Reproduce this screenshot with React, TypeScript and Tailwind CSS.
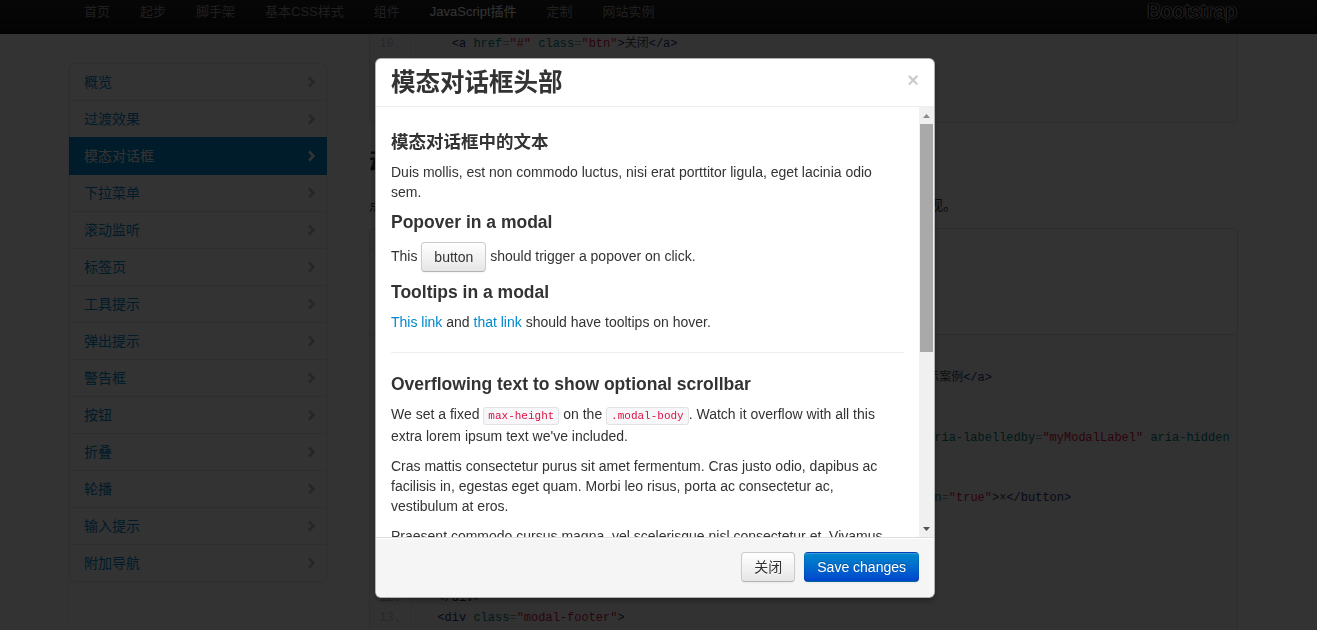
import React from 'react'

const navItems = ['首页', '起步', '脚手架', '基本CSS样式', '组件', 'JavaScript插件', '定制', '网站实例']

const sideItems = [
  '概览', '过渡效果', '模态对话框', '下拉菜单', '滚动监听', '标签页', '工具提示',
  '弹出提示', '警告框', '按钮', '折叠', '轮播', '输入提示', '附加导航',
]

const staticCode = [
  '    <a href="#" class="btn">关闭</a>',
  '    <a href="#" class="btn btn-primary">Save changes</a>',
  '  </div>',
  '</div>',
]

const liveCode = [
  '<!-- Button to trigger modal -->',
  '<a href="#myModal" role="button" class="btn" data-toggle="modal">查看演示案例</a>',
  '',
  '<!-- Modal -->',
  '<div id="myModal" class="modal hide fade" tabindex="-1" role="dialog" aria-labelledby="myModalLabel" aria-hidden\n="true">',
  '  <div class="modal-header">',
  '    <button type="button" class="close" data-dismiss="modal" aria-hidden="true">×</button>',
  '    <h3 id="myModalLabel">Modal header</h3>',
  '  </div>',
  '  <div class="modal-body">',
  '    <p>One fine body…</p>',
  '  </div>',
  '  <div class="modal-footer">',
  '    <button class="btn" data-dismiss="modal" aria-hidden="true">关闭</button>',
  '    <button class="btn btn-primary">Save changes</button>',
  '  </div>',
  '</div>',
]

// prettify-ish colours
const tokenColor: Record<string, string> = {
  com: 'text-[#93a1a1]',
  tag: 'text-[#1e347b]',
  atv: 'text-[#dd1144]',
  pun: 'text-[#93a1a1]',
  atn: 'text-[#008080]',
  pln: 'text-[#48484c]',
}

const tokenRe = /(<!--.*?-->)|(<\/?[a-zA-Z0-9]+)|("[^"]*")|(=)|(>)|([a-zA-Z-]+(?=\n?=))|(\s+)|([^<>="\s]+)/g
const kinds = ['com', 'tag', 'atv', 'pun', 'tag', 'atn', 'pln', 'pln']

function highlight(src: string) {
  return Array.from(src.matchAll(tokenRe)).map((m, i) => {
    const k = kinds[m.slice(1).findIndex((g) => g !== undefined)]
    return (
      <span key={i} className={tokenColor[k]}>
        {m[0]}
      </span>
    )
  })
}

function CodeLines({ start, lines }: { start: number; lines: string[] }) {
  return (
    <>
      {lines.map((src, i) => (
        <div key={i} className="flex">
          <span className="w-[33px] shrink-0 pr-[10px] text-right text-[#bebec5]">{start + i}.</span>
          <span className="pl-[12px] whitespace-pre">{highlight(src)}</span>
        </div>
      ))}
    </>
  )
}

function Chevron({ active }: { active: boolean }) {
  return (
    <svg
      width="14"
      height="14"
      viewBox="0 0 14 14"
      className={active ? '-mr-[6px] text-white' : '-mr-[6px] text-black opacity-25'}
    >
      <path d="M5 2.5 L9.5 7 L5 11.5" fill="none" stroke="currentColor" strokeWidth="2.6" strokeLinejoin="miter" />
    </svg>
  )
}

function Scrollbar() {
  return (
    <div className="flex w-[15px] shrink-0 flex-col bg-[#f0f0f0]">
      <div className="flex h-[17px] items-center justify-center">
        <svg width="7" height="4" viewBox="0 0 7 4">
          <polygon points="0,4 3.5,0 7,4" fill="#8a8a8a" />
        </svg>
      </div>
      <div className="mx-[1px] h-[228px] bg-[#a9a9a9]" />
      <div className="flex-1" />
      <div className="flex h-[17px] items-center justify-center">
        <svg width="7" height="4" viewBox="0 0 7 4">
          <polygon points="0,0 7,0 3.5,4" fill="#505050" />
        </svg>
      </div>
    </div>
  )
}

export default function App() {
  return (
    <div className="relative h-screen overflow-hidden bg-white font-['Liberation_Sans','Noto_Sans_CJK_SC',sans-serif] text-[14px] leading-[20px] text-[#333]">
      {/* Navbar */}
      <div className="h-[34px] bg-linear-to-b from-[#222] to-[#111]">
        <div className="ml-[69px] flex w-[1168px] justify-between">
          <ul className="flex pt-[3px] text-[13px] leading-[18px]">
            {navItems.map((n) => (
              <li key={n}>
                <a className={n === 'JavaScript插件' ? 'block px-[15px] text-white' : 'block px-[15px] text-[#999]'}>{n}</a>
              </li>
            ))}
          </ul>
          <span className="text-[21px] leading-[22px] text-black [text-shadow:0_0_1px_#fff,0_0_1px_#fff,0_0_2px_#ddd]">Bootstrap</span>
        </div>
      </div>

      <div className="flex pl-[69px]">
        {/* Sidebar */}
        <ul className="mt-[29px] w-[258px] shrink-0 rounded-[6px] bg-white shadow-[0_1px_4px_rgba(0,0,0,0.065)]">
          {sideItems.map((s, i) => {
            const active = i === 2
            const first = i === 0
            const last = i === sideItems.length - 1
            return (
              <li key={s}>
                <a
                  className={`-mb-px flex items-center justify-between border px-[14px] py-[8px] ${
                    active ? 'relative border-[#0088cc] bg-[#0088cc] text-white' : 'border-[#e5e5e5] text-[#0088cc]'
                  } ${first ? 'rounded-t-[6px]' : ''} ${last ? 'rounded-b-[6px]' : ''}`}
                >
                  {s}
                  <Chevron active={active} />
                </a>
              </li>
            )
          })}
        </ul>

        {/* Main column */}
        <main className="ml-[42px] w-[869px] shrink-0">
          <pre className="rounded-b-[4px] border border-t-0 border-[#e1e1e8] bg-[#f7f7f9] px-[8px] pb-[8px] font-['Liberation_Mono','Noto_Sans_CJK_SC',monospace] text-[12px] leading-[20px] shadow-[inset_40px_0_0_#fbfbfc,inset_41px_0_0_#ececf0]">
            <CodeLines start={10} lines={staticCode} />
          </pre>

          <h3 className="mt-[20px] text-[24.5px] font-bold leading-[40px]">动态实例</h3>
          <p className="mt-[12px] mb-[13px] tracking-[-0.2px]">点击下面的按钮即可通过JavaScript启动一个模态对话框。此模态对话框将从上到下、逐渐浮现。</p>

          <div className="relative flex rounded-t-[4px] border border-[#ddd] bg-white px-[19px] pt-[39px] pb-[14px]">
            <span className="absolute -top-px -left-px rounded-tl-[4px] rounded-br-[4px] border border-[#ddd] bg-[#f5f5f5] px-[7px] py-[3px] text-[12px] font-bold leading-[14px] text-[#9da0a4]">
              实例
            </span>
            <button className="rounded-[6px] border border-[#ccc] bg-linear-to-b from-white to-[#e6e6e6] px-[19px] py-[11px] text-[17.5px] leading-[28px]">
              查看演示案例
            </button>
          </div>

          <pre className="rounded-b-[4px] border border-t-0 border-[#e1e1e8] bg-[#f7f7f9] px-[8px] pt-[13px] pb-[8px] font-['Liberation_Mono','Noto_Sans_CJK_SC',monospace] text-[12px] leading-[20px] shadow-[inset_40px_0_0_#fbfbfc,inset_41px_0_0_#ececf0]">
            <CodeLines start={1} lines={liveCode} />
          </pre>
        </main>
      </div>

      {/* Backdrop */}
      <div className="fixed inset-0 z-40 bg-black/80" />

      {/* Modal */}
      <div className="fixed top-[58px] left-[375px] z-50 w-[560px] rounded-[6px] border border-black/30 bg-white shadow-[0_3px_7px_rgba(0,0,0,0.3)]">
        <div className="flex items-start justify-between border-b border-[#eee] px-[15px] py-[9px]">
          <h3 className="text-[24.5px] font-bold leading-[29px]">模态对话框头部</h3>
          <button className="mt-[2px] text-[20px] font-bold leading-[20px] text-black opacity-20 [text-shadow:0_1px_0_#fff]">×</button>
        </div>

        <div className="flex h-[430px]">
          <div className="min-w-0 flex-1 overflow-hidden p-[15px]">
            <h4 className="my-[10px] text-[17.5px] font-bold leading-[20px]">模态对话框中的文本</h4>
            <p className="mb-[10px]">Duis mollis, est non commodo luctus, nisi erat porttitor ligula, eget lacinia odio sem.</p>

            <h4 className="my-[10px] text-[17.5px] font-bold leading-[20px]">Popover in a modal</h4>
            <p className="mb-[10px]">
              This{' '}
              <button className="inline-block rounded-[4px] border border-[#ccc] border-b-[#b3b3b3] bg-linear-to-b from-white to-[#e6e6e6] px-[12px] py-[4px] align-middle leading-[20px] shadow-[inset_0_1px_0_rgba(255,255,255,0.2),0_1px_2px_rgba(0,0,0,0.05)]">
                button
              </button>{' '}
              should trigger a popover on click.
            </p>

            <h4 className="my-[10px] text-[17.5px] font-bold leading-[20px]">Tooltips in a modal</h4>
            <p className="mb-[10px]">
              <a className="text-[#0088cc]">This link</a> and <a className="text-[#0088cc]">that link</a> should have tooltips on hover.
            </p>

            <hr className="my-[20px] border-t border-b border-t-[#eee] border-b-white" />

            <h4 className="my-[10px] text-[17.5px] font-bold leading-[20px]">Overflowing text to show optional scrollbar</h4>
            <p className="mb-[10px]">
              We set a fixed{' '}
              <code className="rounded-[3px] border border-[#e1e1e8] bg-[#f7f7f9] px-[4px] py-[2px] font-['Liberation_Mono',monospace] text-[11px] text-[#dd1144]">max-height</code>{' '}
              on the{' '}
              <code className="rounded-[3px] border border-[#e1e1e8] bg-[#f7f7f9] px-[4px] py-[2px] font-['Liberation_Mono',monospace] text-[11px] text-[#dd1144]">.modal-body</code>
              . Watch it overflow with all this extra lorem ipsum text we've included.
            </p>
            <p className="mb-[10px]">
              Cras mattis consectetur purus sit amet fermentum. Cras justo odio, dapibus ac facilisis in, egestas eget quam. Morbi leo risus, porta ac consectetur ac, vestibulum at eros.
            </p>
            <p className="mb-[10px]">
              Praesent commodo cursus magna, vel scelerisque nisl consectetur et. Vivamus sagittis lacus vel augue laoreet rutrum faucibus dolor auctor.
            </p>
            <p className="mb-[10px]">
              Aenean lacinia bibendum nulla sed consectetur. Praesent commodo cursus magna, vel scelerisque nisl consectetur et. Donec sed odio dui. Donec ullamcorper nulla non metus auctor fringilla.
            </p>
          </div>
          <Scrollbar />
        </div>

        <div className="flex justify-end gap-[9px] rounded-b-[6px] border-t border-[#ddd] bg-[#f5f5f5] px-[15px] pt-[14px] pb-[15px] shadow-[inset_0_1px_0_#fff]">
          <button className="rounded-[4px] border border-[#ccc] border-b-[#b3b3b3] bg-linear-to-b from-white to-[#e6e6e6] px-[12px] py-[4px] leading-[20px] text-[#333] shadow-[inset_0_1px_0_rgba(255,255,255,0.2),0_1px_2px_rgba(0,0,0,0.05)] [text-shadow:0_1px_1px_rgba(255,255,255,0.75)]">
            关闭
          </button>
          <button className="rounded-[4px] border border-black/10 border-b-black/25 bg-linear-to-b from-[#0088cc] to-[#0044cc] px-[12px] py-[4px] leading-[20px] text-white shadow-[inset_0_1px_0_rgba(255,255,255,0.2),0_1px_2px_rgba(0,0,0,0.05)] [text-shadow:0_-1px_0_rgba(0,0,0,0.25)]">
            Save changes
          </button>
        </div>
      </div>
    </div>
  )
}
